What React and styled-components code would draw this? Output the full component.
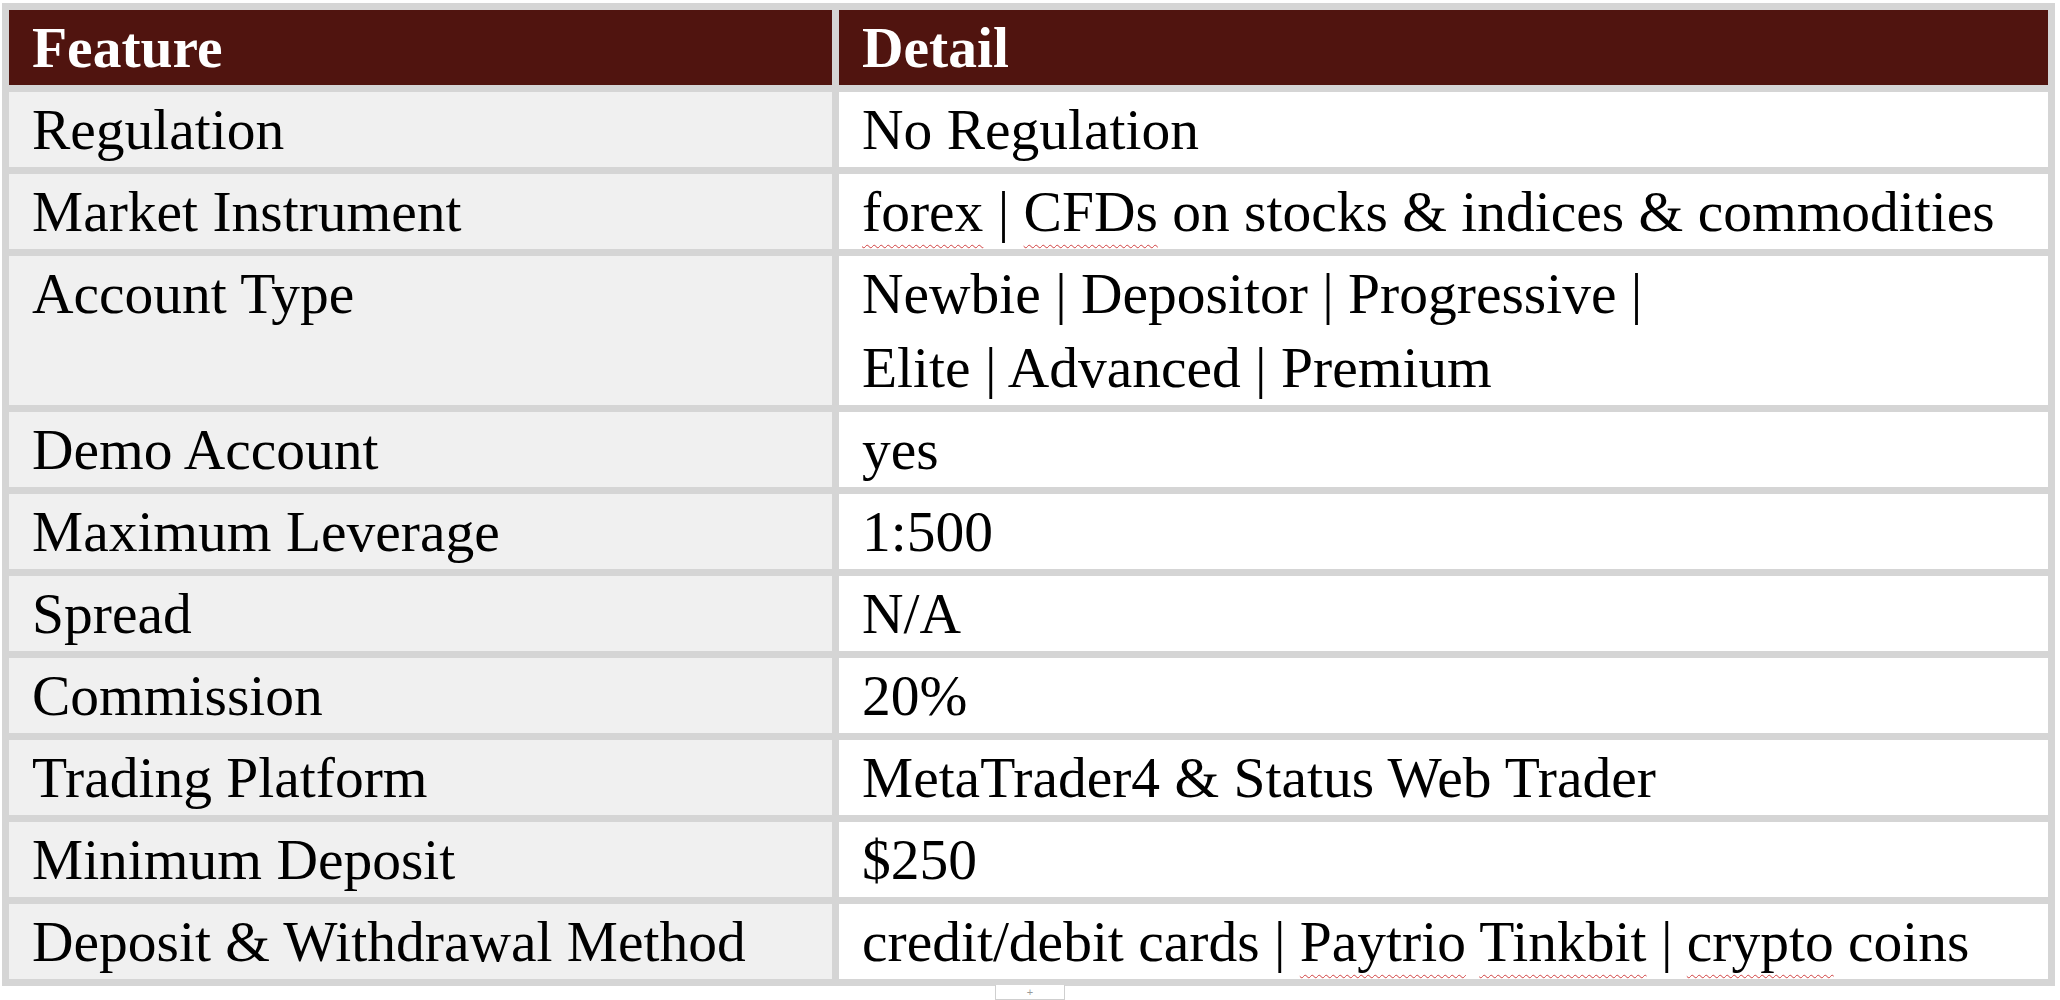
import React from 'react';
import styled, {createGlobalStyle} from 'styled-components';

const GlobalStyle = createGlobalStyle`
  html, body {
    margin: 0;
    padding: 0;
    background: #ffffff;
  }
  body {
    font-family: "Liberation Serif", "Times New Roman", serif;
    color: #000;
  }
`

const Page = styled.div`
  padding: 3px 0 0 2px;
`

const TableStyled = styled.table`
  border-collapse: separate;
  border-spacing: 7px;
  background: #d5d5d5;
  table-layout: fixed;
  width: 2053px;
`

const HeadCell = styled.th`
  background: #50140f;
  color: #ffffff;
  font-weight: bold;
  font-size: 57.5px;
  line-height: 74px;
  padding: 1px 23px 0;
  text-align: left;
  vertical-align: top;
  white-space: nowrap;
`

const Cell = styled.td`
  background: ${p => (p.$label ? '#f0f0f0' : '#ffffff')};
  font-size: 57.5px;
  line-height: 74px;
  padding: 1px 23px 0;
  vertical-align: top;
  white-space: nowrap;
`

const Typo = styled.span`
  text-decoration: underline wavy #d04040;
  text-decoration-thickness: 1px;
  text-underline-offset: 13px;
`

const Handle = styled.div`
  margin: -1px 0 0 993px;
  width: 68px;
  height: 14px;
  border: 1px solid #cfcfcf;
  border-top: none;
  background: #fff;
  color: #9a9a9a;
  font-family: "Liberation Sans", Arial, sans-serif;
  font-size: 11px;
  line-height: 14px;
  text-align: center;
`

const rows = [
  ['Regulation', 'No Regulation'],
  ['Market Instrument', <><Typo>forex</Typo> | <Typo>CFDs</Typo> on stocks &amp; indices &amp; commodities</>],
  ['Account Type', <>Newbie | Depositor | Progressive |<br/>Elite | Advanced | Premium</>],
  ['Demo Account', 'yes'],
  ['Maximum Leverage', '1:500'],
  ['Spread', 'N/A'],
  ['Commission', '20%'],
  ['Trading Platform', 'MetaTrader4 & Status Web Trader'],
  ['Minimum Deposit', '$250'],
  ['Deposit & Withdrawal Method', <>credit/debit cards | <Typo>Paytrio</Typo> <Typo>Tinkbit</Typo> | <Typo>crypto</Typo> coins</>],
];

export default function App() {
  return (
    <Page>
      <GlobalStyle/>
      <TableStyled>
        <colgroup>
          <col style={{width: 823}}/>
          <col style={{width: 1209}}/>
        </colgroup>
        <thead>
        <tr>
          <HeadCell>Feature</HeadCell>
          <HeadCell>Detail</HeadCell>
        </tr>
        </thead>
        <tbody>
        {rows.map(([label, value], index) =>
          <tr key={index}>
            <Cell $label>{label}</Cell>
            <Cell>{value}</Cell>
          </tr>)}
        </tbody>
      </TableStyled>
      <Handle>+</Handle>
    </Page>
  );
}
